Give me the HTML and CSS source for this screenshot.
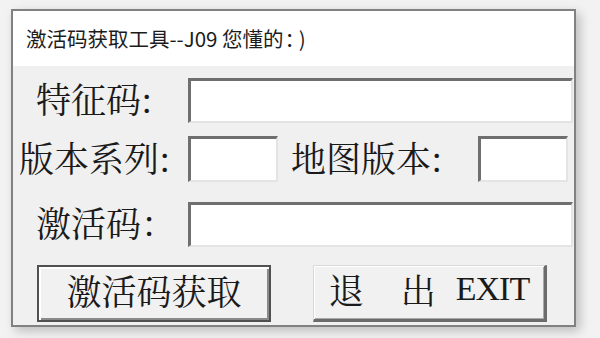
FILE: index.html
```html
<!DOCTYPE html>
<html lang="zh-CN">
<head>
<meta charset="utf-8">
<title>激活码获取工具</title>
<link rel="stylesheet" href="styles.css">
</head>
<body>
<div class="window">
  <div class="titlebar"><span class="title">激活码获取工具--J09 您懂的<span class="colon">：</span>)</span></div>
  <div class="client">
    <div class="row row1">
      <label class="label lbl-a">特征码:</label>
      <div class="field field-wide"></div>
    </div>
    <div class="row row2">
      <label class="label lbl-b">版本系列:</label>
      <div class="field field-small"></div>
      <label class="label lbl-c">地图版本:</label>
      <div class="field field-small"></div>
    </div>
    <div class="row row3">
      <label class="label lbl-a">激活码：</label>
      <div class="field field-wide"></div>
    </div>
    <div class="row buttons">
      <button class="btn btn-default">激活码获取</button>
      <button class="btn btn-exit"><span class="cjk">退</span><span class="cjk gap">出</span><span class="latin">EXIT</span></button>
    </div>
  </div>
</div>
</body>
</html>
```
FILE: styles.css
```css
html, body {
  margin: 0;
  padding: 0;
}
body {
  width: 600px;
  height: 338px;
  overflow: hidden;
  background: #f2f2f2;
}
.window {
  margin: 9px 0 0 11px;
  width: 561px;
  height: 314px;
  border: 2px solid #818181;
  box-shadow: 4px 4px 10px rgba(0, 0, 0, 0.22);
  background: #f0f0f0;
  display: flex;
  flex-direction: column;
  overflow: hidden;
}
.titlebar {
  height: 55px;
  background: #ffffff;
  display: flex;
  align-items: center;
  padding-left: 13px;
  flex-shrink: 0;
}
.title {
  font-family: "Noto Sans CJK SC", "Noto Sans", sans-serif;
  font-size: 20.5px;
  color: #1c1c1c;
  margin-top: -1px;
}
.colon {
  margin-left: 1px;
  margin-right: 4px;
}
.client {
  flex: 1;
  background: #f0f0f0;
  padding-top: 12px;
  display: flex;
  flex-direction: column;
}
.row {
  display: flex;
  align-items: center;
}
.row2 { margin-top: 13px; }
.row3 { margin-top: 20px; }
.buttons { margin-top: 18px; }
.label {
  font-family: "Noto Serif CJK SC", "Liberation Serif", "Noto Sans CJK SC", serif;
  font-size: 35px;
  line-height: 40px;
  color: #1a1a1a;
  white-space: nowrap;
  margin-top: -5px;
  box-sizing: border-box;
}
.lbl-a { margin-left: 23px; width: 152px; }
.lbl-b { margin-left: 6px; width: 169px; }
.lbl-c { margin-left: 13px; width: 187px; }
.field {
  box-sizing: border-box;
  background: #ffffff;
  border-style: solid;
  border-width: 3px 2px 2px 3px;
  border-color: #6f6f6f #e4e4e4 #e4e4e4 #6f6f6f;
  flex-shrink: 0;
}
.field-wide { width: 385px; height: 45px; }
.field-small { width: 90px; height: 46px; }
.btn {
  box-sizing: border-box;
  height: 57px;
  width: 234px;
  background: #f1f1f1;
  padding: 0 0 8px 0;
  margin: 0;
  font-family: "Noto Serif CJK SC", "Liberation Serif", "Noto Sans CJK SC", serif;
  font-size: 35px;
  line-height: 40px;
  color: #1a1a1a;
  display: flex;
  align-items: center;
  justify-content: center;
  white-space: nowrap;
}
.btn-default {
  margin-left: 24px;
  border: 2px solid #505050;
  box-shadow: inset 2px 2px 0 #ffffff, inset -2px -2px 0 #8a8a8a;
}
.btn-exit {
  margin-left: 42px;
  border-style: solid;
  border-width: 1px 3px 3px 1px;
  border-color: #d8d8d8 #6b6b6b #6b6b6b #d8d8d8;
  box-shadow: inset 1px 1px 0 #ffffff, inset -1px -1px 0 #a9a9a9;
}
.gap { margin-left: 37px; }
.latin {
  font-family: "Liberation Serif", serif;
  font-size: 34px;
  margin-left: 20px;
  letter-spacing: -1px;
}
```
